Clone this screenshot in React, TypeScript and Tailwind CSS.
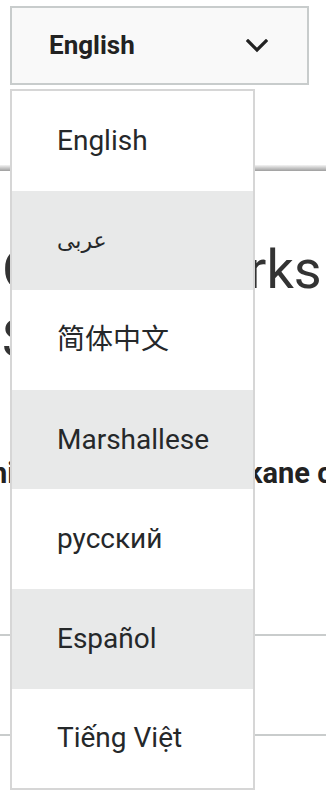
import React from "react";

const languages = [
  { label: "English", shaded: false },
  { label: "عربى", shaded: true, small: true },
  { label: "简体中文", shaded: false },
  { label: "Marshallese", shaded: true },
  { label: "русский", shaded: false },
  { label: "Español", shaded: true },
  { label: "Tiếng Việt", shaded: false },
];

export default function App() {
  return (
    <div
      className="relative w-[326px] h-[790px] overflow-hidden bg-white text-[#222]"
      style={{ fontFamily: 'Roboto, "Noto Sans CJK SC", "DejaVu Sans", sans-serif' }}
    >
      {/* Header */}
      <header className="h-[165px] pt-[6px] pl-[10px]">
        <button className="flex w-[299px] h-[79px] items-center justify-between border-2 border-[#c8cccc] bg-[#f9f9f9] pl-[37px] pr-[39px]">
          <span className="text-[26px] font-bold text-[#222]">English</span>
          <svg width="22" height="14" viewBox="0 0 22 14" fill="none">
            <path d="M2 2 L11 11 L20 2" stroke="#222" strokeWidth="3.2" strokeLinecap="square" />
          </svg>
        </button>
      </header>
      <div className="h-[6px] bg-linear-to-b from-[#f4f4f4] to-[#9e9e9e]" />

      {/* Page content */}
      <main className="flex flex-col">
        <h1 className="mt-[64px] pl-[2px] text-[54px] leading-[69px] font-normal text-[#333] whitespace-nowrap">
          <span className="block">Our networks</span>
          <span className="block">Services</span>
        </h1>
        <p className="mt-[82px] flex whitespace-nowrap text-[29px] leading-[36px] font-bold text-[#222]">
          <span className="-ml-[9px] w-[256px] shrink-0">hi</span>
          <span>kane c</span>
        </p>
        <div className="mt-[143px] h-[2px] bg-[#c9cccc]" />
        <div className="mt-[98px] h-[2px] bg-[#c9cccc]" />
        <p className="mt-[50px] pl-[28px] text-[24px] font-bold leading-[30px] text-[#222] whitespace-nowrap">
          Disclose a vinyl
        </p>
      </main>

      {/* Dropdown menu */}
      <ul className="absolute left-[10px] top-[89px] w-[245px] border-2 border-[#d6d6d6] bg-white">
        {languages.map((l) => (
          <li
            key={l.label}
            className={
              "flex h-[99.6px] items-center pl-[45px] text-[#25282a] " +
              (l.shaded ? "bg-[#e8e9e9] " : "bg-white ") +
              (l.small ? "text-[22px]" : "text-[28px]")
            }
          >
            {l.label}
          </li>
        ))}
      </ul>
    </div>
  );
}
